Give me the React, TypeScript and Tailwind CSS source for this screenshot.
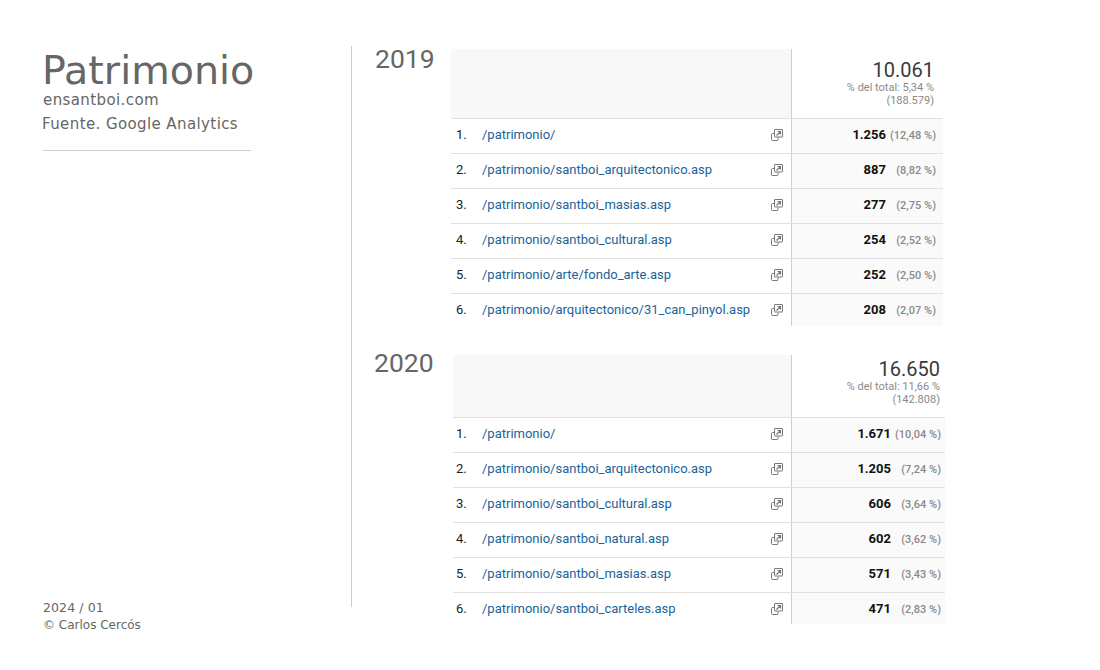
import React from "react";

type Row = { path: string; value: string; pct: string };

const data2019: Row[] = [
  { path: "/patrimonio/", value: "1.256", pct: "(12,48 %)" },
  { path: "/patrimonio/santboi_arquitectonico.asp", value: "887", pct: "(8,82 %)" },
  { path: "/patrimonio/santboi_masias.asp", value: "277", pct: "(2,75 %)" },
  { path: "/patrimonio/santboi_cultural.asp", value: "254", pct: "(2,52 %)" },
  { path: "/patrimonio/arte/fondo_arte.asp", value: "252", pct: "(2,50 %)" },
  { path: "/patrimonio/arquitectonico/31_can_pinyol.asp", value: "208", pct: "(2,07 %)" },
];

const data2020: Row[] = [
  { path: "/patrimonio/", value: "1.671", pct: "(10,04 %)" },
  { path: "/patrimonio/santboi_arquitectonico.asp", value: "1.205", pct: "(7,24 %)" },
  { path: "/patrimonio/santboi_cultural.asp", value: "606", pct: "(3,64 %)" },
  { path: "/patrimonio/santboi_natural.asp", value: "602", pct: "(3,62 %)" },
  { path: "/patrimonio/santboi_masias.asp", value: "571", pct: "(3,43 %)" },
  { path: "/patrimonio/santboi_carteles.asp", value: "471", pct: "(2,83 %)" },
];

// open-in-new-window glyph used by Analytics
function OpenIcon() {
  return (
    <svg width="12" height="12" viewBox="0 0 12 12" fill="none" className="shrink-0 mt-[2px]">
      <path d="M3.5 4.5H1.5a1 1 0 0 0-1 1v5a1 1 0 0 0 1 1h4.500a1 1 0 0 0 1-1V8.500" stroke="#777" />
      <rect x="3.500" y="0.500" width="8" height="7.500" rx="0.500" stroke="#777" />
      <path d="M5.500 6.500L9 3M6.500 2.500H9.500V5.500" stroke="#777" strokeWidth="1.200" />
    </svg>
  );
}

function ReportTable({
  rows,
  total,
  share,
  base,
  leftW,
  rightW,
  headH,
  headPad,
  valuePad,
  rowPadL,
  rowPadR,
  pctW,
  lastH,
}: {
  rows: Row[];
  total: string;
  share: string;
  base: string;
  leftW: string;
  rightW: string;
  headH: string;
  headPad: string;
  valuePad: string;
  rowPadL: string;
  rowPadR: string;
  pctW: string;
  lastH: string;
}) {
  return (
    <div className="font-['Roboto',sans-serif]">
      <div className={`flex ${headH} border-b border-[#e0e0e0]`}>
        <div className={`${leftW} bg-[#f8f8f8] border-r border-[#cfcfcf]`} />
        <div className={`${rightW} ${headPad} ${valuePad} text-right`}>
          <div className="text-[20px] leading-[20px] text-[#3a3a3a]">{total}</div>
          <div className="text-[11px] leading-[13px] mt-px text-[#8a8a8a]">{share}</div>
          <div className="text-[11px] leading-[13px] text-[#8a8a8a]">{base}</div>
        </div>
      </div>
      {rows.map((r, i) => (
        <div key={r.path} className={`flex ${i < 5 ? "h-[35px] border-b border-[#e0e0e0]" : lastH}`}>
          <div className={`${leftW} flex items-start pt-[8px] ${rowPadL} pr-[8px] bg-white border-r border-[#cfcfcf]`}>
            <span className="w-[26px] text-[13px] leading-[16px] text-[#222]">{i + 1}.</span>
            <span className="flex-1 text-[13px] leading-[16px] text-[#1a6399] whitespace-nowrap">{r.path}</span>
            <OpenIcon />
          </div>
          <div className={`${rightW} flex items-start pt-[8px] justify-end ${rowPadR} bg-[#fafafa] whitespace-nowrap`}>
            <span className="text-[13px] leading-[16px] font-bold text-[#111]">{r.value}</span>
            <span className={`${pctW} mt-px text-right text-[11px] leading-[16px] font-medium text-[#8a8a8a]`}>{r.pct}</span>
          </div>
        </div>
      ))}
    </div>
  );
}

export default function App() {
  return (
    <div className="w-[1100px] h-[670px] bg-white flex font-['DejaVu_Sans',sans-serif] overflow-hidden">
      <aside className="w-[351px] h-[634px] pt-[48px] pl-[42px] flex flex-col justify-between text-[#666]">
        <div>
          <h1 className="text-[39.600px] leading-[44px] text-[#666]">Patrimonio</h1>
          <p className="text-[15px] tracking-[0.4px] leading-[18px] mt-[-1px] pl-px">ensantboi.com</p>
          <p className="text-[15px] tracking-[0.4px] leading-[18px] mt-[6px]">Fuente. Google Analytics</p>
          <div className="w-[208px] h-px bg-[#ccc] ml-px mt-[17px]" />
        </div>
        <div className="leading-[17px] pl-px">
          <p className="text-[12.500px] tracking-[0.1px]">2024 / 01</p>
          <p className="text-[12px] mt-px">© Carlos Cercós</p>
        </div>
      </aside>
      <div className="w-px h-[561px] mt-[46px] bg-[#ccc]" />
      <main className="flex-1 pt-[49px] flex flex-col">
        <section className="flex h-[306px]">
          <h2 className="w-[99px] pl-[23px] mt-[-5px] text-[26.500px] leading-[30px] text-[#666] font-['Roboto',sans-serif]">2019</h2>
          <ReportTable
            rows={data2019}
            total="10.061"
            share="% del total: 5,34 %"
            base="(188.579)"
            leftW="w-[341px]"
            rightW="w-[151px]"
            headH="h-[70px]"
            headPad="pt-[11px]"
            valuePad="pr-[9px]"
            rowPadL="pl-[5px]"
            rowPadR="pr-[7px]"
            pctW="w-[50px]"
            lastH="h-[32px]"
          />
        </section>
        <section className="flex">
          <h2 className="w-[101px] pl-[22px] mt-[-7px] text-[26.500px] leading-[30px] text-[#666] font-['Roboto',sans-serif]">2020</h2>
          <ReportTable
            rows={data2020}
            total="16.650"
            share="% del total: 11,66 %"
            base="(142.808)"
            leftW="w-[339px]"
            rightW="w-[153px]"
            headH="h-[63px]"
            headPad="pt-[4px]"
            valuePad="pr-[5px]"
            rowPadL="pl-[3px]"
            rowPadR="pr-[4px]"
            pctW="w-[50px]"
            lastH="h-[31px]"
          />
        </section>
      </main>
    </div>
  );
}
